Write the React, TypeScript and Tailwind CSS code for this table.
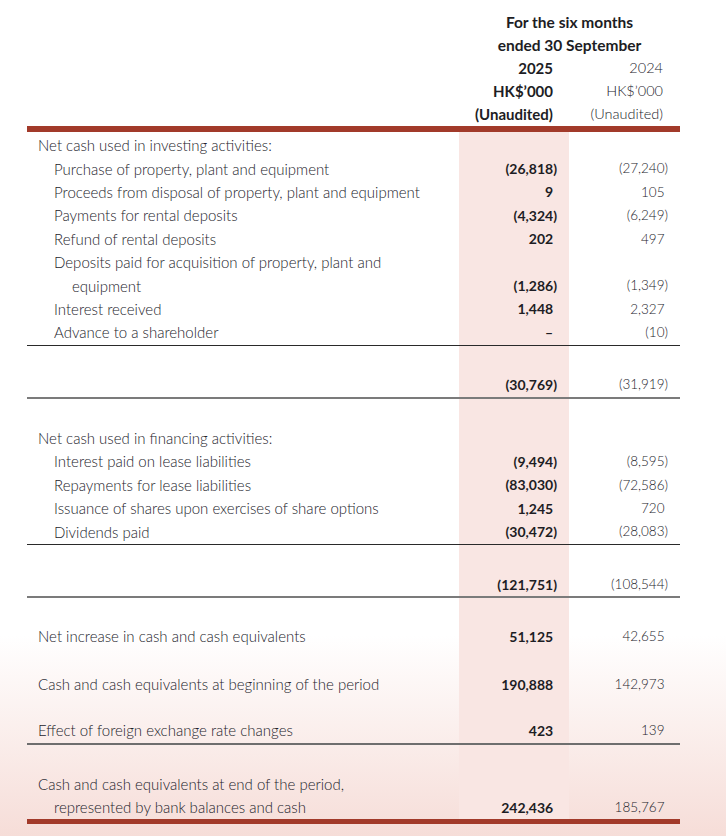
import type { ReactNode } from "react";

type RowProps = {
  h: string;
  label?: ReactNode;
  indent?: 0 | 1 | 2;
  cur?: string;
  prev?: string;
  border?: string;
};

const Num = ({ v }: { v?: string }) => {
  if (!v) return null;
  const paren = v.endsWith(")");
  return (
    <span>
      {v}
      {!paren && <span className="invisible">)</span>}
    </span>
  );
};

const Row = ({ h, label, indent = 0, cur, prev, border = "" }: RowProps) => (
  <div className={`flex ${h} ${border}`}>
    <div
      className={`flex flex-1 items-center text-[15px] font-light text-[#23232b] ${
        indent === 0 ? "pl-[11px]" : indent === 1 ? "pl-[27px]" : "pl-[45px]"
      }`}
    >
      {label}
    </div>
    <div className="flex w-[110px] items-center justify-end bg-[#f9e6e3] pr-[12px] font-bold text-[#1d1d24]">
      <Num v={cur} />
    </div>
    <div className="flex w-[111px] items-center justify-end pr-[12px] text-[13.5px] font-light text-[#23232b]">
      <Num v={prev} />
    </div>
  </div>
);

const App = () => {
  return (
    <div className="h-[836px] w-[726px] overflow-hidden bg-[linear-gradient(to_bottom,#ffffff_0%,#ffffff_76%,#f6ddd8_100%)] font-['Lato',sans-serif] text-[14px] leading-none">
      <div className="ml-[27px] w-[653px]">
        {/* heading */}
        <div className="pt-[11px]">
          <div className="flex h-[23px] items-center justify-end">
            <div className="w-[221px] text-center text-[15.5px] font-bold text-[#1d1d24]">For the six months</div>
          </div>
          <div className="flex h-[23px] items-center justify-end">
            <div className="w-[221px] text-center text-[15.5px] font-bold text-[#1d1d24]">ended 30 September</div>
          </div>
          {[
            ["2025", "2024"],
            ["HK$’000", "HK$’000"],
            ["(Unaudited)", "(Unaudited)"],
          ].map(([a, b]) => (
            <div key={a} className="flex h-[23px] items-center justify-end">
              <div className="w-[110px] pr-[16px] text-right text-[15px] font-bold text-[#1d1d24]">{a}</div>
              <div className="w-[111px] pr-[17px] text-right text-[14.5px] font-light text-[#23232b]">{b}</div>
            </div>
          ))}
        </div>

        <div className="h-[6px] bg-[#a23a2a]" />

        {/* investing */}
        <Row h="h-[2px]" />
        <Row h="h-[23.4px]" label="Net cash used in investing activities:" />
        <Row h="h-[23.4px]" indent={1} label="Purchase of property, plant and equipment" cur="(26,818)" prev="(27,240)" />
        <Row h="h-[23.4px]" indent={1} label="Proceeds from disposal of property, plant and equipment" cur="9" prev="105" />
        <Row h="h-[23.4px]" indent={1} label="Payments for rental deposits" cur="(4,324)" prev="(6,249)" />
        <Row h="h-[23.4px]" indent={1} label="Refund of rental deposits" cur="202" prev="497" />
        <Row h="h-[23.4px]" indent={1} label="Deposits paid for acquisition of property, plant and" />
        <Row h="h-[23.4px]" indent={2} label="equipment" cur="(1,286)" prev="(1,349)" />
        <Row h="h-[23.4px]" indent={1} label="Interest received" cur="1,448" prev="2,327" />
        <Row
          h="h-[24.4px]"
          indent={1}
          label="Advance to a shareholder"
          cur="–"
          prev="(10)"
          border="border-b border-[#2a2a2a]"
        />
        <Row h="h-[28px]" />
        <Row h="h-[25.4px]" cur="(30,769)" prev="(31,919)" border="border-b-2 border-[#7b7b7b]" />

        {/* financing */}
        <Row h="h-[28px]" />
        <Row h="h-[23.4px]" label="Net cash used in financing activities:" />
        <Row h="h-[23.4px]" indent={1} label="Interest paid on lease liabilities" cur="(9,494)" prev="(8,595)" />
        <Row h="h-[23.4px]" indent={1} label="Repayments for lease liabilities" cur="(83,030)" prev="(72,586)" />
        <Row h="h-[23.4px]" indent={1} label="Issuance of shares upon exercises of share options" cur="1,245" prev="720" />
        <Row
          h="h-[24.4px]"
          indent={1}
          label="Dividends paid"
          cur="(30,472)"
          prev="(28,083)"
          border="border-b border-[#2a2a2a]"
        />
        <Row h="h-[28px]" />
        <Row h="h-[25.4px]" cur="(121,751)" prev="(108,544)" border="border-b-2 border-[#7b7b7b]" />

        {/* totals */}
        <Row h="h-[27px]" />
        <Row h="h-[23.4px]" label="Net increase in cash and cash equivalents" cur="51,125" prev="42,655" />
        <Row h="h-[24.6px]" />
        <Row h="h-[23.4px]" label="Cash and cash equivalents at beginning of the period" cur="190,888" prev="142,973" />
        <Row h="h-[22.6px]" />
        <Row
          h="h-[25.4px]"
          label="Effect of foreign exchange rate changes"
          cur="423"
          prev="139"
          border="border-b-2 border-[#6e6e6e]"
        />
        <Row h="h-[28px]" />
        <Row h="h-[23.4px]" label="Cash and cash equivalents at end of the period," />
        <Row h="h-[23.4px]" indent={1} label="represented by bank balances and cash" cur="242,436" prev="185,767" />
        <div className="h-[5px] bg-[#a23a2a]" />
      </div>
    </div>
  );
};

export default App;
